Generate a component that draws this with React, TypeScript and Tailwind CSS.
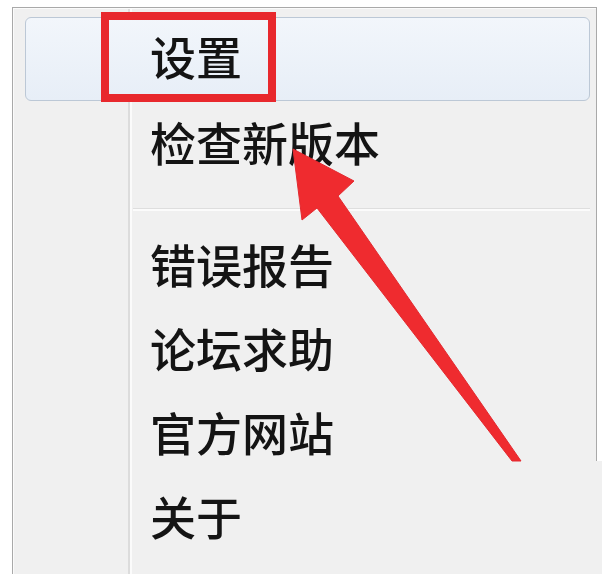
const ITEMS_TOP = ['检查新版本']
const ITEMS_BOTTOM = ['错误报告', '论坛求助', '官方网站', '关于']

const FONT = { fontFamily: '"Noto Sans CJK SC", "Noto Sans", sans-serif' }

function Item({ label, h }: { label: string; h: string }) {
  return (
    <div className={`${h} ml-[12px] mr-[6px] pl-[125px] flex items-center text-[46px] font-medium leading-none text-[#141414]`}>
      <span className="blur-[0.4px] -mt-[8px]">{label}</span>
    </div>
  )
}

function Arrow() {
  return (
    <svg className="absolute inset-0 pointer-events-none" width="602" height="574" viewBox="0 0 602 574">
      <rect x="591" y="461" width="11" height="113" fill="#f0f0f0" />
      <polygon
        points="293,149 354,181 338,196 521,461 512,461 317,208 302,220"
        fill="#ef2b2f"
        stroke="#e32a30"
        strokeWidth="1"
        strokeLinejoin="round"
      />
    </svg>
  )
}

export default function App() {
  return (
    <div className="relative w-[602px] h-[574px] overflow-hidden bg-white pl-[12px] pt-[7px]" style={FONT}>
      <div className="w-[585px] h-full border-l border-t border-r border-[#a9a9a9] bg-[linear-gradient(to_right,#f0f0f0_115px,#dcdcdc_115px,#dcdcdc_117px,#fbfbfb_117px,#fbfbfb_119px,#f0f0f0_119px)] shadow-[inset_1px_1px_0_#fbfbfb] pt-[9px]">
        {/* highlighted row */}
        <div className="h-[84px] ml-[12px] mr-[6px] pl-[124px] flex items-center rounded-[6px] border border-[#bcc8d6] bg-[linear-gradient(to_bottom,#f2f6fb,#e7eef7)] text-[46px] font-medium leading-none text-[#141414]">
          <span className="blur-[0.4px] -mt-[8px]">设置</span>
        </div>
        {ITEMS_TOP.map((label) => (
          <Item key={label} label={label} h="h-[88px]" />
        ))}
        <div className="h-[36px] pt-[19px] pl-[120px] pr-[6px]">
          <div className="h-[3px] border-t border-[#dedede] bg-[#fbfbfb]" />
        </div>
        {ITEMS_BOTTOM.map((label) => (
          <Item key={label} label={label} h="h-[84px]" />
        ))}
      </div>

      {/* annotation */}
      <div className="absolute left-[101px] top-[12px] w-[175px] h-[90px] border-[8px] border-[#e8282d]" />
      <Arrow />
    </div>
  )
}
